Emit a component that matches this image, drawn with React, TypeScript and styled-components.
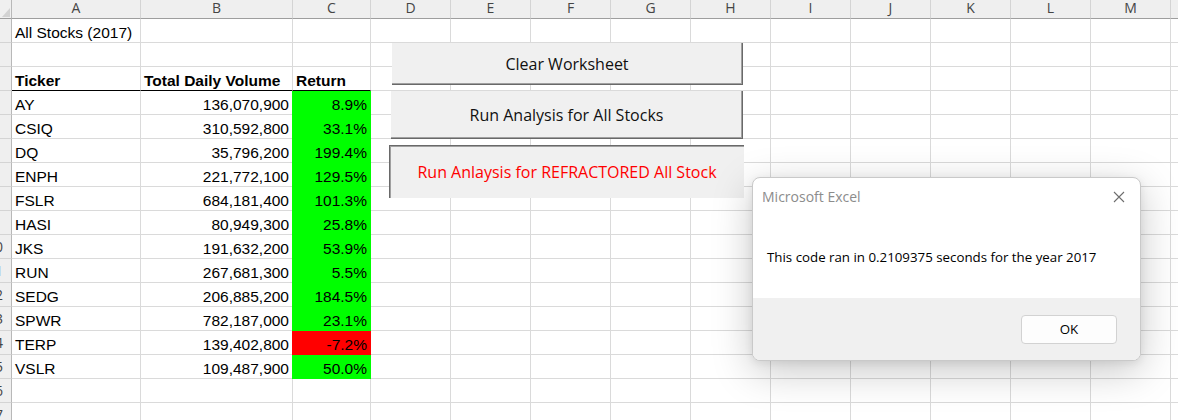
import React from "react";
import styled, { createGlobalStyle } from "styled-components";

const UI_FONT = `"Open Sans", "Noto Sans", sans-serif`;
const CELL_FONT = `"Liberation Sans", Arial, sans-serif`;
const GRID = "#dadada";

const GlobalStyle = createGlobalStyle`
  html, body { margin: 0; padding: 0; background: #fff; overflow: hidden; }
  #root { width: 1178px; height: 420px; }
`;

const Sheet = styled.div`
  position: relative;
  width: 1178px;
  height: 420px;
  overflow: hidden;
  background: #fff;
`;

const Grid = styled.div`
  display: grid;
  grid-template-columns: 12px 129px 152px 78px repeat(10, 80px) 7px;
  grid-template-rows: 19px repeat(17, 24px);
`;

const Corner = styled.div`
  box-sizing: border-box;
  background: #efefef;
  border-right: 1px solid #b8b8b8;
  border-bottom: 1px solid #9e9e9e;
  display: flex;
  align-items: flex-end;
  justify-content: flex-end;
`;

const ColHeader = styled.div<{ $last?: boolean }>`
  box-sizing: border-box;
  background: #efefef;
  border-right: ${(p) => (p.$last ? "none" : "1px solid #d4d4d4")};
  border-bottom: 1px solid #9e9e9e;
  font: 400 14px/16px ${UI_FONT};
  color: #454545;
  text-align: center;
`;

const RowHeader = styled.div`
  box-sizing: border-box;
  background: #efefef;
  border-right: 1px solid #b8b8b8;
  border-bottom: 1px solid #d4d4d4;
  overflow: hidden;
  font: 400 14px/24px ${UI_FONT};
  color: #454545;
`;

const RowNumber = styled.span`
  display: block;
  width: 32px;
  margin-left: -21px;
  text-align: center;
`;

const Cell = styled.div<{
  $align?: "left" | "right";
  $bold?: boolean;
  $fill?: string;
  $rule?: boolean;
  $last?: boolean;
}>`
  box-sizing: border-box;
  background: ${(p) => p.$fill ?? "#fff"};
  border-right: ${(p) => (p.$last ? "none" : `1px solid ${p.$fill ?? GRID}`)};
  border-bottom: 1px solid ${(p) => (p.$rule ? "#000" : p.$fill ?? GRID)};
  box-shadow: ${(p) => (p.$fill ? `-1px 0 0 ${p.$fill}` : "none")};
  font: ${(p) => (p.$bold ? 700 : 400)} 15.5px/18px ${CELL_FONT};
  color: #000;
  display: flex;
  align-items: flex-end;
  justify-content: ${(p) => (p.$align === "right" ? "flex-end" : "flex-start")};
  padding: 0 3px;
  white-space: nowrap;
`;

const SheetButton = styled.div<{
  $top: number;
  $left: number;
  $width: number;
  $height: number;
  $pressed?: boolean;
  $accent?: string;
}>`
  position: absolute;
  top: ${(p) => p.$top}px;
  left: ${(p) => p.$left}px;
  width: ${(p) => p.$width}px;
  height: ${(p) => p.$height}px;
  box-sizing: border-box;
  background: #f0f0f0;
  ${(p) =>
    p.$pressed
      ? `border-top: 1px solid #696969; border-left: 1px solid #696969; box-shadow: inset 1px 1px 0 #a0a0a0;`
      : `border-right: 1px solid #696969; border-bottom: 1px solid #696969; box-shadow: inset -1px -1px 0 #a0a0a0;`}
  display: flex;
  align-items: center;
  justify-content: center;
  font: 400 16px/20px ${UI_FONT};
  color: ${(p) => p.$accent ?? "#111"};
  white-space: nowrap;
`;

const Dialog = styled.div`
  position: absolute;
  left: 752px;
  top: 177px;
  width: 389px;
  height: 184px;
  box-sizing: border-box;
  border: 1px solid #c9c9c9;
  border-radius: 8px;
  background: #fff;
  overflow: hidden;
  display: flex;
  flex-direction: column;
  box-shadow: 0 10px 40px rgba(0, 0, 0, 0.22), 0 2px 8px rgba(0, 0, 0, 0.08);
  font-family: ${UI_FONT};
`;

const TitleBar = styled.div`
  height: 37px;
  display: flex;
  align-items: center;
  justify-content: space-between;
  padding: 0 15px 0 9px;
`;

const Title = styled.span`
  font-size: 14px;
  color: #8c8c8c;
`;

const CloseButton = styled.span`
  display: flex;
  width: 12px;
  height: 12px;
  align-items: center;
  justify-content: center;
`;

const Message = styled.div`
  flex: 1;
  display: flex;
  align-items: center;
  padding-left: 14px;
  font-size: 13.3px;
  color: #000;
`;

const Footer = styled.div`
  height: 62px;
  background: #f0f0f0;
  display: flex;
  align-items: center;
  justify-content: flex-end;
  padding-right: 23px;
`;

const OkButton = styled.div`
  width: 96px;
  height: 29px;
  box-sizing: border-box;
  background: #fdfdfd;
  border: 1px solid #d2d2d2;
  border-radius: 4px;
  display: flex;
  align-items: center;
  justify-content: center;
  font-size: 13.3px;
  color: #000;
`;

const COLS = ["A", "B", "C", "D", "E", "F", "G", "H", "I", "J", "K", "L", "M", "N"];

const DATA: [string, string, string][] = [
  ["AY", "136,070,900", "8.9%"],
  ["CSIQ", "310,592,800", "33.1%"],
  ["DQ", "35,796,200", "199.4%"],
  ["ENPH", "221,772,100", "129.5%"],
  ["FSLR", "684,181,400", "101.3%"],
  ["HASI", "80,949,300", "25.8%"],
  ["JKS", "191,632,200", "53.9%"],
  ["RUN", "267,681,300", "5.5%"],
  ["SEDG", "206,885,200", "184.5%"],
  ["SPWR", "782,187,000", "23.1%"],
  ["TERP", "139,402,800", "-7.2%"],
  ["VSLR", "109,487,900", "50.0%"],
];

const GREEN = "#00ff00";
const RED = "#ff0000";

function renderRow(r: number) {
  const cells: React.ReactNode[] = [];
  cells.push(
    <RowHeader key={`h${r}`}>
      <RowNumber>{r}</RowNumber>
    </RowHeader>
  );
  const data = r >= 4 && r <= 15 ? DATA[r - 4] : null;
  COLS.forEach((c, i) => {
    const key = `${c}${r}`;
    const last = i === COLS.length - 1;
    if (r === 1 && c === "A") {
      cells.push(<Cell key={key}>All Stocks (2017)</Cell>);
    } else if (r === 3 && (c === "A" || c === "B" || c === "C")) {
      const label = c === "A" ? "Ticker" : c === "B" ? "Total Daily Volume" : "Return";
      cells.push(
        <Cell key={key} $bold $rule>
          {label}
        </Cell>
      );
    } else if (data && c === "A") {
      cells.push(<Cell key={key}>{data[0]}</Cell>);
    } else if (data && c === "B") {
      cells.push(
        <Cell key={key} $align="right">
          {data[1]}
        </Cell>
      );
    } else if (data && c === "C") {
      const neg = data[2].startsWith("-");
      cells.push(
        <Cell key={key} $align="right" $fill={neg ? RED : GREEN}>
          {data[2]}
        </Cell>
      );
    } else {
      cells.push(<Cell key={key} $last={last} />);
    }
  });
  return cells;
}

export default function App() {
  const rows: React.ReactNode[] = [];
  for (let r = 1; r <= 17; r++) rows.push(...renderRow(r));

  return (
    <>
      <GlobalStyle />
      <Sheet>
        <Grid>
          <Corner>
            <svg width="9" height="13" viewBox="0 0 9 13">
              <polygon points="0,12 8,12 8,3" fill="#d2d2d2" />
            </svg>
          </Corner>
          {COLS.map((c, i) => (
            <ColHeader key={c} $last={i === COLS.length - 1}>
              {c === "N" ? "" : c}
            </ColHeader>
          ))}
          {rows}
        </Grid>

        <SheetButton $top={43} $left={392} $width={351} $height={42}>
          Clear Worksheet
        </SheetButton>
        <SheetButton $top={91} $left={391} $width={352} $height={48}>
          Run Analysis for All Stocks
        </SheetButton>
        <SheetButton $top={145} $left={389} $width={355} $height={53} $pressed $accent="#ff0000">
          Run Anlaysis for REFRACTORED All Stock
        </SheetButton>

        <Dialog>
          <TitleBar>
            <Title>Microsoft Excel</Title>
            <CloseButton>
              <svg width="12" height="12" viewBox="0 0 12 12">
                <path d="M1 1 L11 11 M11 1 L1 11" stroke="#6e6e6e" strokeWidth="1.1" fill="none" />
              </svg>
            </CloseButton>
          </TitleBar>
          <Message>This code ran in 0.2109375 seconds for the year 2017</Message>
          <Footer>
            <OkButton>OK</OkButton>
          </Footer>
        </Dialog>
      </Sheet>
    </>
  );
}
